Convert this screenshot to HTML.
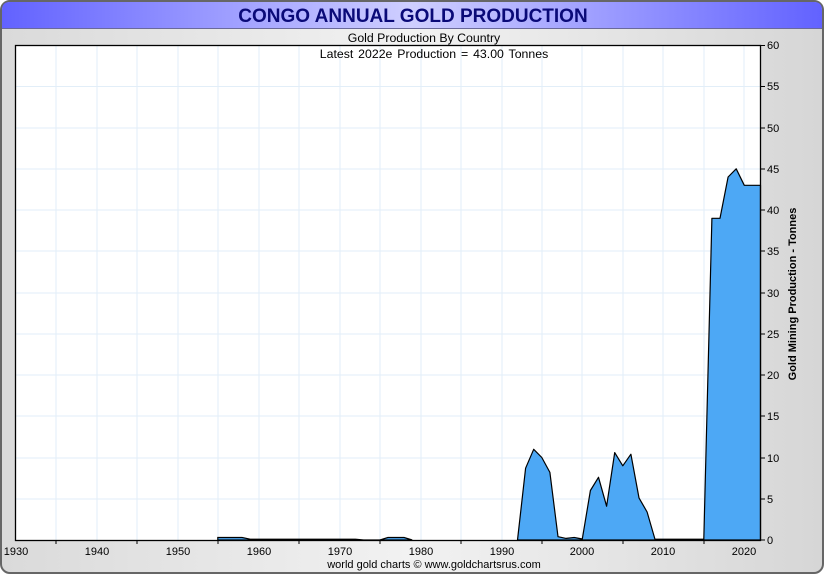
<!DOCTYPE html>
<html><head><style>
body{margin:0;width:825px;height:575px;overflow:hidden;background:#fff;font-family:"Liberation Sans",sans-serif;}
</style></head><body>
<svg width="825" height="575" xmlns="http://www.w3.org/2000/svg" font-family="Liberation Sans, sans-serif">
<defs>
<linearGradient id="bg" x1="0" x2="1" y1="0" y2="0"><stop offset="0" stop-color="#dadada"/><stop offset="0.5" stop-color="#f2f2f2"/><stop offset="1" stop-color="#d6d6d6"/></linearGradient>
<linearGradient id="tb" x1="0" x2="1" y1="0" y2="0"><stop offset="0" stop-color="#6262ff"/><stop offset="0.5" stop-color="#cfcfff"/><stop offset="1" stop-color="#6262ff"/></linearGradient>
</defs>
<rect x="1" y="1" width="822" height="572" rx="9" fill="url(#bg)" stroke="#666" stroke-width="2"/>
<path d="M2,28 L2,10 Q2,2 10,2 L814,2 Q822,2 822,10 L822,28 Z" fill="url(#tb)"/>
<line x1="2" y1="28.5" x2="822" y2="28.5" stroke="#6a6a9a"/>
<text x="413" y="22" text-anchor="middle" font-size="19" font-weight="bold" fill="#0a0a78">CONGO ANNUAL GOLD PRODUCTION</text>
<rect x="15.5" y="45.5" width="745" height="495" fill="#fff"/>
<g stroke="#e2eef8" stroke-width="1">
<line x1="56" y1="45" x2="56" y2="540"/><line x1="97" y1="45" x2="97" y2="540"/><line x1="137" y1="45" x2="137" y2="540"/><line x1="178" y1="45" x2="178" y2="540"/><line x1="218" y1="45" x2="218" y2="540"/><line x1="259" y1="45" x2="259" y2="540"/><line x1="299" y1="45" x2="299" y2="540"/><line x1="340" y1="45" x2="340" y2="540"/><line x1="380" y1="45" x2="380" y2="540"/><line x1="421" y1="45" x2="421" y2="540"/><line x1="461" y1="45" x2="461" y2="540"/><line x1="502" y1="45" x2="502" y2="540"/><line x1="542" y1="45" x2="542" y2="540"/><line x1="582" y1="45" x2="582" y2="540"/><line x1="623" y1="45" x2="623" y2="540"/><line x1="663" y1="45" x2="663" y2="540"/><line x1="704" y1="45" x2="704" y2="540"/><line x1="744" y1="45" x2="744" y2="540"/>
<line x1="15" y1="86.5" x2="760" y2="86.5"/><line x1="15" y1="128" x2="760" y2="128"/><line x1="15" y1="169" x2="760" y2="169"/><line x1="15" y1="210" x2="760" y2="210"/><line x1="15" y1="251" x2="760" y2="251"/><line x1="15" y1="293" x2="760" y2="293"/><line x1="15" y1="334" x2="760" y2="334"/><line x1="15" y1="375" x2="760" y2="375"/><line x1="15" y1="416" x2="760" y2="416"/><line x1="15" y1="458" x2="760" y2="458"/><line x1="15" y1="499" x2="760" y2="499"/>
</g>
<path d="M217.8,540 L217.8,537.5 L242.1,537.5 L250.2,539.2 L355.5,539.2 L363.6,540 L379.8,540 L387.9,537.5 L404.1,537.5 L412.2,540 Z" fill="#4da8f5" stroke="#000" stroke-width="1.2"/>
<path d="M517.5,540 L525.6,468.2 L533.7,449.3 L541.8,457.5 L549.9,472.4 L558,536.7 L566.1,538.4 L574.2,537.5 L582.3,539 L590.4,490.5 L598.5,477.3 L606.6,506.2 L614.7,452.6 L622.8,465.8 L630.9,454.2 L639,497.9 L647.1,512 L655.2,540 L655.2,539.2 L703.8,539.2 L711.9,218.3 L720,218.3 L728.1,177 L736.2,168.8 L744.3,185.3 L760.5,185.3 L760.5,540 Z" fill="#4da8f5" stroke="#000" stroke-width="1.2" stroke-linejoin="round"/>
<rect x="15.5" y="45.5" width="745" height="495" fill="none" stroke="#000" stroke-width="1.3"/>
<g stroke="#000" stroke-width="1">
<line x1="760" y1="45.5" x2="765" y2="45.5"/><line x1="760" y1="86.5" x2="765" y2="86.5"/><line x1="760" y1="128" x2="765" y2="128"/><line x1="760" y1="169" x2="765" y2="169"/><line x1="760" y1="210" x2="765" y2="210"/><line x1="760" y1="251" x2="765" y2="251"/><line x1="760" y1="293" x2="765" y2="293"/><line x1="760" y1="334" x2="765" y2="334"/><line x1="760" y1="375" x2="765" y2="375"/><line x1="760" y1="416" x2="765" y2="416"/><line x1="760" y1="458" x2="765" y2="458"/><line x1="760" y1="499" x2="765" y2="499"/><line x1="760" y1="540" x2="765" y2="540"/>
<line x1="56" y1="540" x2="56" y2="544"/><line x1="137" y1="540" x2="137" y2="544"/><line x1="218" y1="540" x2="218" y2="544"/><line x1="299" y1="540" x2="299" y2="544"/><line x1="380" y1="540" x2="380" y2="544"/><line x1="461" y1="540" x2="461" y2="544"/><line x1="542" y1="540" x2="542" y2="544"/><line x1="623" y1="540" x2="623" y2="544"/><line x1="704" y1="540" x2="704" y2="544"/>
</g>
<g font-size="11" fill="#000">
<text x="767" y="49">60</text><text x="767" y="90">55</text><text x="767" y="132">50</text><text x="767" y="173">45</text><text x="767" y="214">40</text><text x="767" y="255">35</text><text x="767" y="297">30</text><text x="767" y="338">25</text><text x="767" y="379">20</text><text x="767" y="420">15</text><text x="767" y="462">10</text><text x="767" y="503">5</text><text x="767" y="544">0</text>
</g>
<g font-size="11" fill="#000" text-anchor="middle">
<text x="16" y="555">1930</text><text x="97" y="555">1940</text><text x="178" y="555">1950</text><text x="259" y="555">1960</text><text x="340" y="555">1970</text><text x="421" y="555">1980</text><text x="502" y="555">1990</text><text x="582" y="555">2000</text><text x="663" y="555">2010</text><text x="744" y="555">2020</text>
</g>
<text x="434" y="568" text-anchor="middle" font-size="11">world gold charts © www.goldchartsrus.com</text>
<text x="424" y="42" text-anchor="middle" font-size="12.3">Gold Production By Country</text>
<text x="434" y="58" text-anchor="middle" font-size="12.3" word-spacing="1.5">Latest 2022e  Production = 43.00 Tonnes</text>
<text transform="translate(796,294) rotate(-90)" text-anchor="middle" font-size="11" font-weight="bold">Gold Mining Production - Tonnes</text>
</svg>
</body></html>
